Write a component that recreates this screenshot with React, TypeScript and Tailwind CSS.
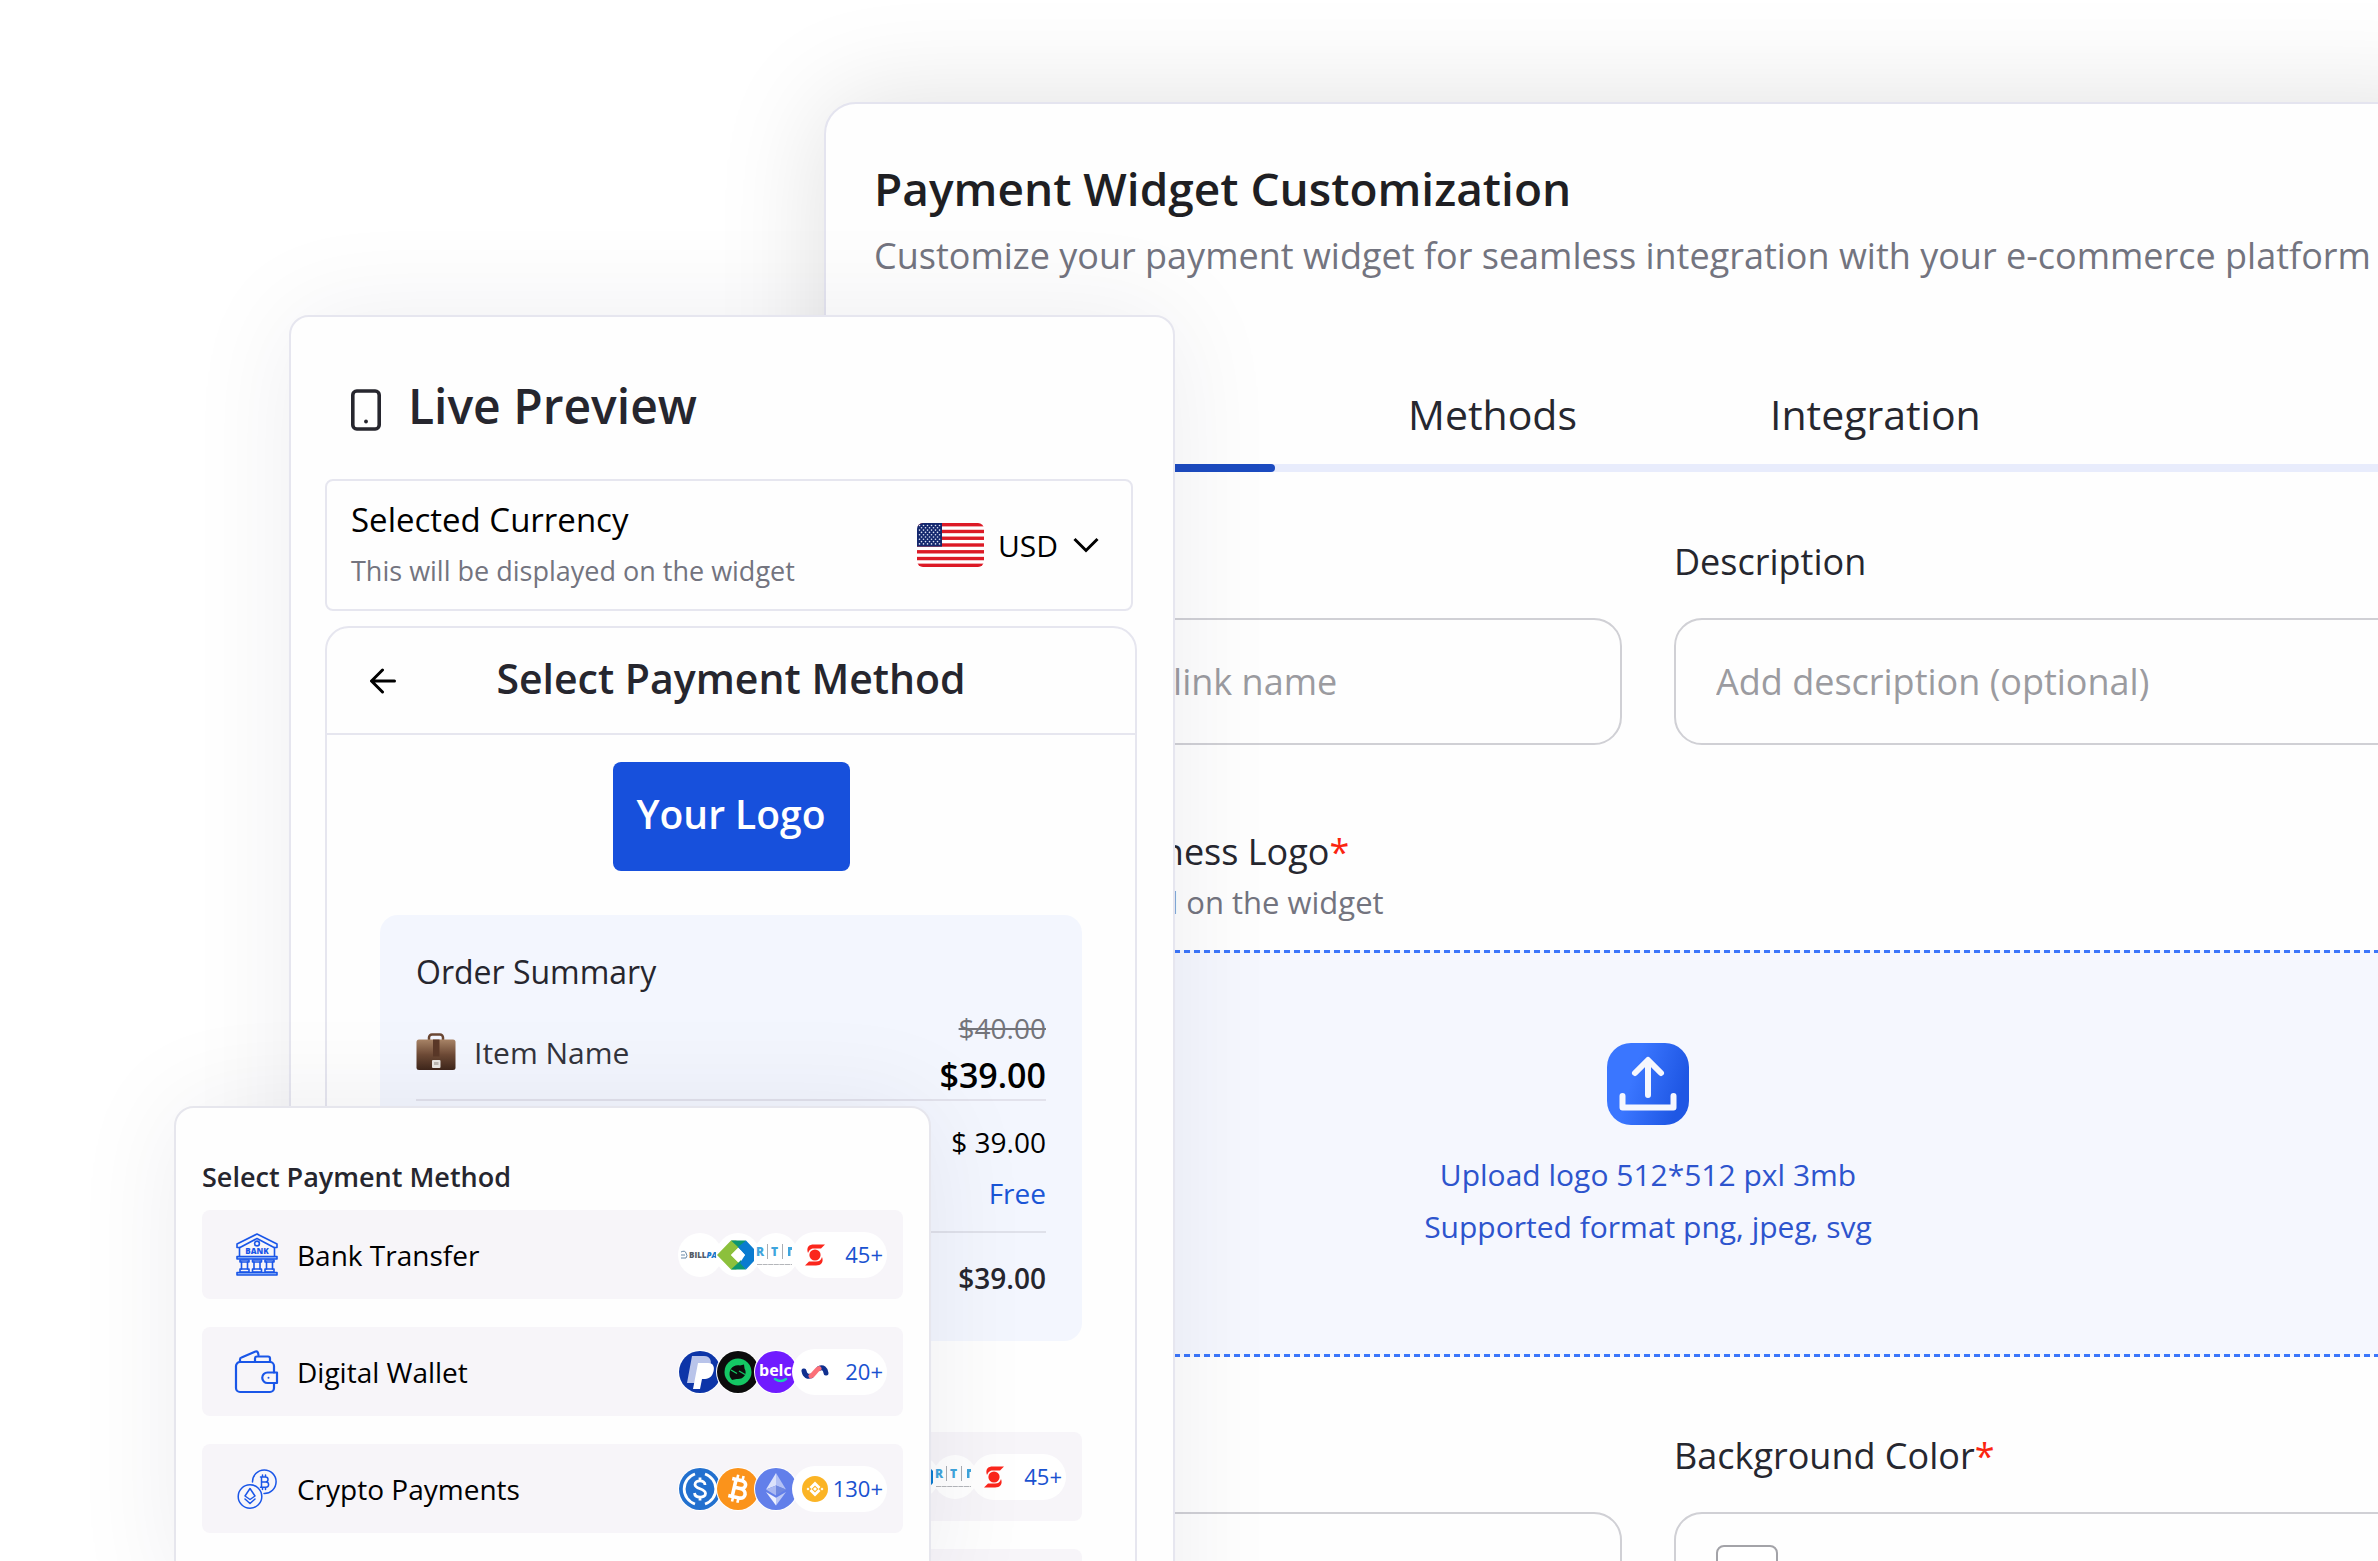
import { useState } from 'react';
import type { ReactNode } from 'react';

type Method = {
  name: string;
  count: string;
  icon: ReactNode;
  logos: ReactNode[];
  last: ReactNode;
};

function BankIcon() {
  return (
    <svg width="46" height="46" viewBox="0 0 46 46" fill="none" stroke="#1a56e8" strokeWidth="1.6" strokeLinejoin="round" strokeLinecap="round">
      <path d="M23 2 L43 12 V15.5 H40 L23 6.5 L6 15.5 H3 V12 Z" />
      <path d="M5.5 15.5 V24 M40.5 15.5 V24" />
      <circle cx="23" cy="11.5" r="2.4" />
      <path d="M3 24.5 H43 V27 H3 Z M3 40.5 H43 V43 H3 Z" fill="#9dbcf8" />
      <path d="M6 28 H15 V30 H6 Z M18.500 28 H27.500 V30 H18.500 Z M31 28 H40 V30 H31 Z" />
      <path d="M7.500 30 V37 M13.500 30 V37 M20 30 V37 M26 30 V37 M32.500 30 V37 M38.500 30 V37" />
      <path d="M6 37 H15 V40 H6 Z M18.500 37 H27.500 V40 H18.500 Z M31 37 H40 V40 H31 Z" />
      <text x="23" y="21.500" textAnchor="middle" fontSize="8" fontWeight="800" fill="#1a56e8" stroke="none" fontFamily="Open Sans, sans-serif">BANK</text>
    </svg>
  );
}

function WalletIcon() {
  return (
    <svg width="46" height="46" viewBox="0 0 46 46" fill="none" stroke="#1a56e8" strokeWidth="2.200" strokeLinejoin="round" strokeLinecap="round">
      <path d="M40 23.500 V17 a4 4 0 0 0 -4 -4 H6 a4 4 0 0 0 -4 4 V39 a4 4 0 0 0 4 4 H36 a4 4 0 0 0 4 -4 V34" />
      <path d="M6 12.500 V10.500 a2 2 0 0 1 1.500 -2 L21.500 2.500 a2 2 0 0 1 2.500 1.300 L24.500 6" />
      <path d="M21 12.500 V9.500 a2 2 0 0 1 2 -2 H34 a2 2 0 0 1 2 2 V12.500" />
      <path d="M43 23.500 H33.500 a5.200 5.200 0 0 0 0 10.500 H43 Z" />
      <circle cx="34.500" cy="28.700" r="1" fill="#1a56e8" stroke="none" />
    </svg>
  );
}

function CryptoIcon() {
  return (
    <svg width="46" height="46" viewBox="0 0 46 46" fill="none" stroke="#1a56e8" strokeWidth="1.500" strokeLinejoin="round" strokeLinecap="round">
      <path d="M18.500 16 a11.800 11.800 0 1 1 11.500 11.500" />
      <circle cx="16" cy="30.500" r="11.800" />
      <path d="M16 22.500 L21 30 L16 33.500 L11 30 Z M11 33 L16 37.500 L21 33" />
      <path d="M26.500 11 H31.500 a2.400 2.400 0 0 1 0 5 H27.500 H32 a2.600 2.600 0 0 1 0 5.200 H26.500 M27.500 11 V21 M28.500 9 V11 M31.500 9 V11 M28.500 21.500 V23.500 M31.500 21.500 V23.500" />
    </svg>
  );
}

// 重なる丸ロゴの共通枠
function Disc({ fill, children }: { fill: string; children: ReactNode }) {
  return (
    <svg className="-mr-[6px] shrink-0" width="44" height="44" viewBox="0 0 44 44">
      <circle cx="22" cy="22" r="22" fill="#fff" />
      <circle cx="22" cy="22" r="21" fill={fill} />
      {children}
    </svg>
  );
}

const billPay = (
  <Disc fill="#fff">
    <path d="M3 19 q4 -2 5 1 M3 22 h4 M3 25 h5 q2 -2 0 -5" stroke="#6b8aa8" strokeWidth="1" fill="none" />
    <text x="11" y="25" fontSize="8" fontWeight="800" fill="#555b66" fontFamily="Open Sans, sans-serif">BILL<tspan fill="#1877c9" fontStyle="italic">PA</tspan></text>
  </Disc>
);

const greenBlue = (
  <Disc fill="#fff">
    <path d="M15 7.500 H20 L26 11 L15 22 L26 33 L20 36.500 H15 L1 22 Z" fill="#8cc03c" />
    <path d="M15 7.500 H30 L25 17 L22 14 Z" fill="#0c9670" />
    <path d="M15 36.500 H30 L25 27 L22 30 Z" fill="#0c9670" />
    <path d="M30 7.500 L38 16 V28 L30 36.500 L24 30 L29 22 L22 14 Z" fill="#0a7bd0" />
    <path d="M22 15 L29 22 L22 29 L15 22 Z" fill="#fff" />
  </Disc>
);

const rtp = (
  <Disc fill="#fff">
    <text x="2" y="23" fontSize="12" fontWeight="800" fill="#3fa5dd" fontFamily="Open Sans, sans-serif">R</text>
    <text x="17" y="23" fontSize="12" fontWeight="800" fill="#3fa5dd" fontFamily="Open Sans, sans-serif">T</text>
    <path d="M34 14 H38 V17 H36.500 V23 H34 Z" fill="#3fa5dd" />
    <path d="M13.500 11 V26 M28.500 11 V26" stroke="#a9adb3" strokeWidth="1" />
    <path d="M3 31.500 H38" stroke="#b4b6ba" strokeWidth="1.200" strokeDasharray="5 0.600" />
  </Disc>
);

const paypal = (
  <Disc fill="#0d35a8">
    <path d="M14 6 H26 C33 6 34 12 32 17 C30 22 25 23 20 23 L17 33 H9 Z" fill="#b9c4ea" />
    <path d="M20 13 H30 C36 13 37 18 35 23 C33 29 28 29 24 29 L22 39 H15 Z" fill="#fff" />
  </Disc>
);

const lemon = (
  <Disc fill="#0c0c0c">
    <circle cx="22" cy="22" r="13.500" fill="#14c764" />
    <path d="M14 27 C12 20 17 14 24 15.500 L28 14.500 L28.500 18.500 C32 24 27 30 20.500 29 L16 30 Z" fill="#0c0c0c" />
    <path d="M15 20 L21 23.500 M23 21 L29 24.500" stroke="#14c764" strokeWidth="1.400" />
  </Disc>
);

const belo = (
  <Disc fill="#701bff">
    <text x="5" y="26" fontSize="16" fontWeight="700" fill="#fff" fontFamily="Open Sans, sans-serif">belc</text>
    <path d="M21 29 q6 4 11 0" stroke="#14d3b0" strokeWidth="2.500" fill="none" strokeLinecap="round" />
  </Disc>
);

const usdc = (
  <Disc fill="#2270cf">
    <path d="M17 7 A15.800 15.800 0 0 0 17 37 M27 7 A15.800 15.800 0 0 1 27 37" stroke="#fff" strokeWidth="2.800" fill="none" />
    <path d="M27 18 C27 12.500 17 12.500 17 17.500 C17 22.500 27.500 21 27.500 26.500 C27.500 31.500 17 31.500 16.500 26 M22 10.500 V14 M22 30 V33.500" stroke="#fff" strokeWidth="2.800" fill="none" />
  </Disc>
);

const bitcoin = (
  <Disc fill="#fb931b">
    <g transform="rotate(13 22 22)" fill="none" stroke="#fff" strokeWidth="3.600">
      <path d="M14 13 H24 C30 13 30 21 24 21 H17 M24 21 C32 21 32 30.500 25 30.500 H14 M18 12 V31" />
      <path d="M19 8 V13 M24.500 8 V13 M19 30.500 V35.500 M24.500 30.500 V35.500" strokeWidth="2.600" />
    </g>
  </Disc>
);

const ethereum = (
  <Disc fill="#627fea">
    <path d="M22 6 L12 22.500 L22 18.500 Z" fill="#dbe2fb" />
    <path d="M22 6 L32 22.500 L22 18.500 Z" fill="#b3c1f5" />
    <path d="M22 18.500 L12 22.500 L22 28.500 Z" fill="#a9b8f2" />
    <path d="M22 18.500 L32 22.500 L22 28.500 Z" fill="#7089e0" />
    <path d="M12 25 L22 38.500 V30.800 Z" fill="#eef1fd" />
    <path d="M32 25 L22 38.500 V30.800 Z" fill="#bcc8f6" />
  </Disc>
);

const scotia = (
  <svg width="28" height="28" viewBox="0 0 28 28" fill="#fb261c">
    <path d="M7 12 C5 6 8 3.500 13 3.500 H24 L20 7.500 H13 C9.500 7.500 8.500 9 7 12 Z" />
    <path d="M21 16 C23 21 20 24.500 15 24.500 H4 L8 20.500 H15 C18.500 20.500 20 19 21 16 Z" />
    <circle cx="14" cy="14" r="5.600" />
  </svg>
);

const wave = (
  <svg width="28" height="28" viewBox="0 0 28 28" fill="none" strokeWidth="5" strokeLinecap="round">
    <path d="M3 13 C4 18 7 19 10 18" stroke="#10308f" />
    <path d="M18 10.500 C22 8.500 24.500 11 25 15" stroke="#10308f" />
    <path d="M10 18 C13 17 14.500 12 18 10.500" stroke="#fb6f78" />
  </svg>
);

const binance = (
  <svg width="28" height="28" viewBox="0 0 28 28">
    <circle cx="14" cy="14" r="13" fill="#fbb425" />
    <path d="M8.500 12 L14 6.500 L19.500 12 L17.500 14 L14 10.500 L10.500 14 Z M8.500 16 L10.500 14 L14 17.500 L17.500 14 L19.500 16 L14 21.500 Z" fill="#fff" />
    <path d="M14 12 L16 14 L14 16 L12 14 Z M7 12.500 L8.500 14 L7 15.500 L5.500 14 Z M21 12.500 L22.500 14 L21 15.500 L19.500 14 Z" fill="#fff" />
  </svg>
);

const methods: Method[] = [
  { name: 'Bank Transfer', count: '45+', icon: <BankIcon />, logos: [billPay, greenBlue, rtp], last: scotia },
  { name: 'Digital Wallet', count: '20+', icon: <WalletIcon />, logos: [paypal, lemon, belo], last: wave },
  { name: 'Crypto Payments', count: '130+', icon: <CryptoIcon />, logos: [usdc, bitcoin, ethereum], last: binance },
];

function MethodList() {
  return (
    <ul className="flex flex-col gap-[28px]">
      {methods.map((m) => (
        <li key={m.name}>
          <button type="button" className="flex h-[89px] w-full items-center rounded-lg bg-[#f7f5f9] pl-[32px] pr-[16px] text-left">
            {m.icon}
            <span className="ml-[17px] flex-1 text-[28px] text-black">{m.name}</span>
            <span className="flex items-center">
              {m.logos.map((logo, i) => (
                <span key={i} className="flex">{logo}</span>
              ))}
              <span className="relative flex h-[46px] w-[95px] items-center justify-between rounded-full bg-white pl-[9px] pr-[4px] text-[22px] text-[#1a52d0]">
                {m.last}
                <span className="flex-1 text-right">{m.count}</span>
              </span>
            </span>
          </button>
        </li>
      ))}
    </ul>
  );
}

function UsFlag() {
  const stars = [];
  for (let row = 0; row < 9; row++) {
    for (let col = 0; col < (row % 2 ? 5 : 6); col++) {
      stars.push(<circle key={`${row}-${col}`} cx={2.5 + col * 4 + (row % 2 ? 2 : 0)} cy={2.5 + row * 2.3} r="0.8" fill="#dfe4f5" />);
    }
  }
  return (
    <svg width="67" height="44" viewBox="0 0 67 44">
      <clipPath id="flag"><rect width="67" height="44" rx="6" /></clipPath>
      <g clipPath="url(#flag)">
        <rect width="67" height="44" fill="#fff" />
        {[0, 1, 2, 3, 4, 5, 6].map((n) => (
          <rect key={n} y={n * 6.77} width="67" height="3.4" fill="#dc1a26" />
        ))}
        <rect width="25" height="23.6" fill="#14286e" />
        {stars}
      </g>
    </svg>
  );
}

function Briefcase() {
  return (
    <svg width="40" height="38" viewBox="0 0 40 38">
      <defs>
        <linearGradient id="leather" x1="0" y1="0" x2="0" y2="1">
          <stop offset="0" stopColor="#a98467" />
          <stop offset="0.5" stopColor="#6e4a36" />
          <stop offset="1" stopColor="#3f261b" />
        </linearGradient>
      </defs>
      <path d="M13 7 V4.500 a3 3 0 0 1 3 -3 H24 a3 3 0 0 1 3 3 V7" stroke="#6b4733" strokeWidth="2.500" fill="none" />
      <rect x="0.500" y="6.500" width="39" height="30.500" rx="2.500" fill="url(#leather)" />
      <rect x="17" y="6.500" width="6.500" height="17" fill="#5a3828" />
      <rect x="16" y="27" width="8.500" height="8" rx="1" fill="#e9e7e4" />
      <rect x="18" y="29" width="4.500" height="3" fill="#bcb8b3" />
    </svg>
  );
}

function DashedLine() {
  return <span className="h-[3px] w-full bg-[repeating-linear-gradient(90deg,#3b76fb_0px,#3b76fb_6px,transparent_6px,transparent_10px)]" />;
}

const tabs = ['General', 'Methods', 'Integration'];

function CustomizationPanel() {
  const [active, setActive] = useState('General');
  return (
    <main className="-mr-[94px] ml-[824px] mt-[102px] rounded-[32px] border-2 border-[#e4e4ef] bg-[#fefefe] pb-12 pl-[48px] pr-[48px] pt-[50px] shadow-[0_0_110px_rgba(0,0,0,0.13)]">
      <h1 className="text-[46px] font-semibold leading-[68px] text-[#1f1f23]">Payment Widget Customization</h1>
      <p className="mt-[2px] whitespace-nowrap text-[36px] leading-[64px] text-[#73747f]">
        Customize your payment widget for seamless integration with your e-commerce platform
      </p>

      <div role="tablist" className="mt-[98px] flex gap-[73px]">
        {tabs.map((tab) => (
          <button
            key={tab}
            type="button"
            role="tab"
            aria-selected={active === tab}
            onClick={() => setActive(tab)}
            className="px-[60px] pb-[22px] text-[41px] font-medium leading-[56px] text-[#26272f] first:w-[401px]"
          >
            {tab}
          </button>
        ))}
      </div>
      <div className="h-[8px] rounded bg-[#e8ecfc]">
        <div className="h-full w-[401px] rounded bg-[#1c4bc0]" />
      </div>

      <form>
        <div className="mt-[66px] grid grid-cols-2 gap-[52px]">
          <label className="flex flex-col gap-[32px] text-[36px] font-medium leading-[48px] text-[#26272f]">
            Link Name
            <input placeholder="Enter payment link name" className="h-[127px] rounded-[28px] border-2 border-[#d0d0d5] bg-transparent px-[40px] font-normal placeholder:text-[#9b9ba0]" />
          </label>
          <label className="flex flex-col gap-[32px] text-[36px] font-medium leading-[48px] text-[#26272f]">
            Description
            <input placeholder="Add description (optional)" className="h-[127px] rounded-[28px] border-2 border-[#d0d0d5] bg-transparent px-[40px] font-normal placeholder:text-[#9b9ba0]" />
          </label>
        </div>

        <h2 className="mt-[83px] text-[36px] font-medium leading-[48px] text-[#26272f]">
          Upload your Business Logo<span className="text-[#fb2410]">*</span>
        </h2>
        <p className="text-[31px] leading-[52px] text-[#73747f]">This will be displayed on the widget</p>
        <button type="button" className="mt-[22px] flex h-[407px] w-full flex-col items-center justify-between bg-[#f5f7fe] text-[30px] leading-[52px] text-[#2d54cd]">
          <DashedLine />
          <span className="flex flex-col items-center">
            <svg className="mb-[24px]" width="82" height="82" viewBox="0 0 82 82" fill="none">
              <defs>
                <linearGradient id="upload" x1="0" y1="0" x2="1" y2="0.3">
                  <stop offset="0.4" stopColor="#3a76ff" />
                  <stop offset="1" stopColor="#1f57e4" />
                </linearGradient>
              </defs>
              <rect width="82" height="82" rx="24" fill="url(#upload)" />
              <path d="M41 52 V18 M28 30 L41 17 L54 30" stroke="#f5f7fe" strokeWidth="6" strokeLinecap="round" strokeLinejoin="round" />
              <path d="M15.500 53 V64.500 H66.500 V53" stroke="#f5f7fe" strokeWidth="6" strokeLinecap="round" strokeLinejoin="round" />
            </svg>
            <span>Upload logo 512*512 pxl 3mb</span>
            <span className="mb-[12px]">Supported format png, jpeg, svg</span>
          </span>
          <DashedLine />
        </button>

        <div className="mt-[75px] grid grid-cols-2 gap-[52px]">
          {['Text Color', 'Background Color'].map((label) => (
            <label key={label} className="text-[36px] font-medium leading-[48px] text-[#26272f]">
              {label}<span className="text-[#fb2410]">*</span>
              <span className="mt-[32px] flex h-[127px] items-center rounded-[28px] border-2 border-[#d0d0d5] px-[40px]">
                <input
                  type="color"
                  defaultValue="#ffffff"
                  className="h-[62px] w-[62px] appearance-none rounded-[8px] border-2 border-[#a3a3a8] bg-white [&::-webkit-color-swatch-wrapper]:p-1 [&::-webkit-color-swatch]:border-0"
                />
              </span>
            </label>
          ))}
        </div>
      </form>
    </main>
  );
}

function LivePreview() {
  return (
    <section className="absolute left-[289px] top-[315px] w-[886px] rounded-[20px] border-2 border-[#e6e6ef] bg-[#fefefe] pb-12 pl-[34px] pr-[36px] pt-[57px] shadow-[0_0_110px_rgba(20,10,60,0.07)]">
      <h2 className="flex items-center gap-[27px] pl-[26px] text-[48px] font-semibold leading-[64px] text-[#26262e]">
        <svg className="mt-2" width="30" height="42" viewBox="0 0 30 42" fill="none">
          <rect x="1.800" y="2" width="26.400" height="38" rx="4" stroke="#26262e" strokeWidth="3.600" />
          <circle cx="15" cy="32.500" r="1.900" fill="#26262e" />
        </svg>
        Live Preview
      </h2>

      <div className="mr-1 mt-[41px] flex h-[132px] items-center justify-between rounded-lg border-2 border-[#e6e6ef] pl-[24px] pr-[32px]">
        <div className="leading-[51px]">
          <label htmlFor="currency" className="block text-[33px] font-medium text-black">Selected Currency</label>
          <p className="text-[27px] text-[#73747f]">This will be displayed on the widget</p>
        </div>
        <div className="flex items-center">
          <UsFlag />
          <select id="currency" className="ml-[14px] appearance-none text-[30px] text-black">
            <option>USD</option>
          </select>
          <svg className="ml-[14px]" width="26" height="16" viewBox="0 0 26 16" fill="none" stroke="#000" strokeWidth="3">
            <path d="M1.500 2 L13 13.500 L24.500 2" />
          </svg>
        </div>
      </div>

      <div className="mt-[15px] rounded-[24px] border-2 border-[#e6e6ef]">
        <div className="flex h-[107px] items-center border-b-2 border-[#e6e6ef] px-[43px]">
          <button type="button" aria-label="Back">
            <svg width="26" height="26" viewBox="0 0 26 26" fill="none" stroke="#000" strokeWidth="3" strokeLinecap="round" strokeLinejoin="round">
              <path d="M24.500 13 H2 M12.500 2 L1.500 13 L12.500 24" />
            </svg>
          </button>
          <h3 className="flex-1 pb-1 pr-[26px] text-center text-[41px] font-semibold text-[#26262e]">Select Payment Method</h3>
        </div>

        <div className="px-[53px] pb-[52px] pt-[27px]">
          <div className="mx-auto flex h-[109px] w-[237px] items-center justify-center rounded-lg bg-[#1750dc] pb-1 text-[39px] font-semibold text-white">
            Your Logo
          </div>

          <div className="mt-[44px] rounded-[18px] bg-[#f3f6fe] px-[36px] pb-[39px] pt-[33px] text-[28px]">
            <h4 className="text-[32px] leading-[48px] text-[#26262e]">Order Summary</h4>
            <div className="mt-[9px] flex items-center border-b-2 border-[#e2e2ec]">
              <Briefcase />
              <span className="ml-[18px] flex-1 text-[30px] text-[#33343c]">Item Name</span>
              <span className="flex flex-col text-right leading-[47px]">
                <s className="text-[#73747a]">$40.00</s>
                <span className="text-[34px] font-semibold text-black">$39.00</span>
              </span>
            </div>
            <dl className="grid grid-cols-2 border-b-2 border-[#dfe1ea] pb-[12px] pt-[16px] leading-[51px]">
              <dt>Subtotal</dt>
              <dd className="text-right text-black">$ 39.00</dd>
              <dt>Delivery Fee</dt>
              <dd className="text-right text-[#1a55d6]">Free</dd>
            </dl>
            <dl className="grid grid-cols-2 pt-[21px] font-semibold leading-[48px] text-[#26262e]">
              <dt>Total</dt>
              <dd className="text-right">$39.00</dd>
            </dl>
          </div>

          <h4 className="mb-[9px] mt-[34px] text-[27px] font-semibold leading-[48px] text-[#26262e]">Select Payment Method</h4>
          <MethodList />
        </div>
      </div>
    </section>
  );
}

export default function App() {
  return (
    <div className="relative flow-root h-screen overflow-hidden bg-white font-['Open_Sans',sans-serif]">
      <CustomizationPanel />
      <LivePreview />
      <section className="absolute left-[174px] top-[1106px] w-[757px] rounded-[20px] border-2 border-[#e6e6ed] bg-[#fefefe] px-[26px] pb-16 pt-[45px] shadow-[0_0_110px_rgba(20,10,60,0.07)]">
        <h2 className="mb-[9px] text-[27px] font-semibold leading-[48px] text-[#26262e]">Select Payment Method</h2>
        <MethodList />
      </section>
    </div>
  );
}
